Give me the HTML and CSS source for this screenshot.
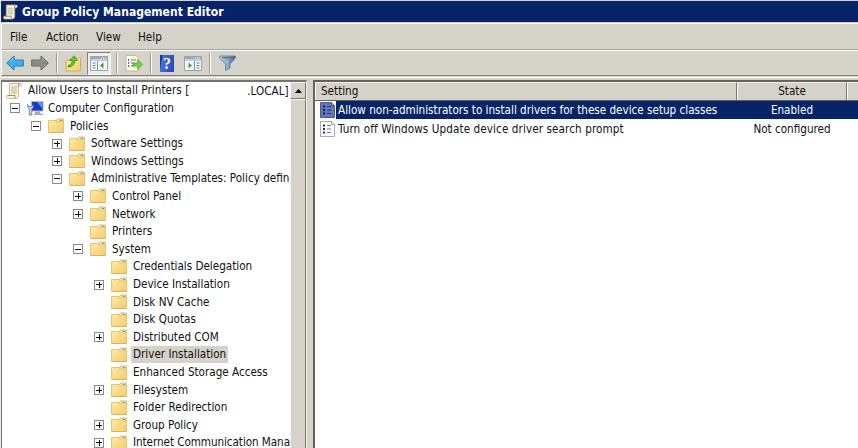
FILE: index.html
```html
<!DOCTYPE html>
<html lang="en">
<head>
<meta charset="utf-8">
<title>Group Policy Management Editor</title>
<link rel="stylesheet" href="styles.css">
</head>
<body>
<svg class="defs" width="0" height="0">
  <defs>
    <linearGradient id="gold" x1="0" y1="0" x2="1" y2="1"><stop offset="0" stop-color="#ffeba6"/><stop offset="1" stop-color="#f3cd6c"/></linearGradient>
    <linearGradient id="blue" x1="0" y1="0" x2="0" y2="1"><stop offset="0" stop-color="#8ed8fa"/><stop offset=".5" stop-color="#39aaf0"/><stop offset="1" stop-color="#45c4f6"/></linearGradient>
    <linearGradient id="grey" x1="0" y1="0" x2="0" y2="1"><stop offset="0" stop-color="#b5b5b5"/><stop offset=".5" stop-color="#858585"/><stop offset="1" stop-color="#aaa"/></linearGradient>
    <linearGradient id="steel" x1="0" y1="0" x2="1" y2="0"><stop offset="0" stop-color="#b8d4e6"/><stop offset=".5" stop-color="#8fb0c8"/><stop offset="1" stop-color="#3d5d78"/></linearGradient>
    <symbol id="folder" viewBox="0 0 16 16">
      <path d="M.5 2.500h8l1-1.500h6v13.500h-15z" fill="url(#gold)" stroke="#e6c474"/>
      <path d="M9.500 1.300h5.500v2.500h-6.500z" fill="#fff0b8" stroke="#cdae5d" stroke-width=".6"/>
      <path d="M11.500 2.500h2.500" stroke="#6f9dbb"/>
      <path d="M1 14.500h14.500" stroke="#d8b25c"/>
    </symbol>
    <symbol id="scroll" viewBox="0 0 16 16">
      <path d="M3.500.5h11c1.500 1 1 3-1 3h-1v9c0 2-1 3-3 3h-8c-1.500-1-1-3 0-3h2v-10z" fill="#fbf4d9" stroke="#b9aa83" stroke-width=".8"/>
      <path d="M12.500 3.500c-1-1 0-3 1.500-2.500M1.500 12.500h7.500c-.5 1.500 0 3 1 3" fill="none" stroke="#978b70"/>
      <path d="M5 4h6M5 6h6M5 8h6M5 10h6" stroke="#aaa386" stroke-width=".8"/>
    </symbol>
    <symbol id="computer" viewBox="0 0 17 16">
      <path d="M4.500 1.500h11.500v9.500H4.500z" fill="#1938c8" stroke="#a7b9d3"/>
      <path d="M10 2h5.500v7z" fill="#638bec"/>
      <path d="M8 11.500h5v2h3V15H7v-1.500h1z" fill="#9eabbd"/>
      <path d="M.7 4.500v3l1.500 1.500v6h2.600V9l1.500-1.500v-3L4.800 6.500H2.200z" fill="#bdd4e6" stroke="#507797" stroke-width=".8"/>
    </symbol>
    <symbol id="policy" viewBox="0 0 15 16">
      <path d="M.5.5h11l3 3v12H.5z" style="fill:var(--sheet);stroke:var(--edge)"/>
      <path d="M11.500.5v3h3" style="fill:var(--fold);stroke:var(--edge)"/>
      <path d="M3 4.500h2M3 8h2M3 11.500h2" style="stroke:var(--mark);stroke-width:2"/>
      <path d="M7 4.500h4M7 8h4M7 11.500h4" style="stroke:var(--line)"/>
    </symbol>
    <symbol id="window" viewBox="0 0 18 15">
      <path d="M.5.5h17v14H.5z" fill="#f6f8fa" stroke="#9aa3ad"/>
      <path d="M1 1h16v2.500H1z" fill="#9aa9bb"/>
      <path d="M11 2h1M13 2h1M15 2h1" stroke="#fff"/>
      <path d="M1 4.500h16" stroke="#c3ccd7"/>
    </symbol>
  </defs>
</svg>
<div class="window">
  <header class="titlebar">
    <svg class="title-icon"><use href="#scroll"/></svg>
    <h1>Group Policy Management Editor</h1>
  </header>
  <nav class="menu"><span class="m-file">File</span><span class="m-action">Action</span><span class="m-view">View</span><span class="m-help">Help</span></nav>
  <div class="toolbar">
    <svg class="arrow" viewBox="0 0 18 16"><path d="M.7 8 8 1v4h9.300v6H8v4z" fill="url(#blue)" stroke="#2873a9"/></svg>
    <svg class="arrow next" viewBox="0 0 18 16"><path d="M17.300 8 10 1v4H.7v6H10v4z" fill="url(#grey)" stroke="#646464"/></svg>
    <i class="sep s1"></i>
    <svg class="up" viewBox="0 0 17 17"><path d="M1 5h7l1-2h6.500v13H1z" fill="url(#gold)" stroke="#d2ac56"/><path d="M3 10.500c4-1 4-3 4-5H4.500L9 .8 12.500 5.500H10c0 4-2.500 6.500-7 6.500z" fill="#61c629" stroke="#348a22" stroke-width=".7"/></svg>
    <span class="pressed"><svg viewBox="0 0 18 15"><use href="#window"/><path d="M7.500 5v9" stroke="#7991b3"/><path d="M2.500 7h3M2.500 9.500h3M2.500 12h3" stroke="#5a7ba9"/><path d="m13.500 6.500-3.500 3 3.500 3z" fill="#36a431"/></svg></span>
    <i class="sep s2"></i>
    <svg class="export" viewBox="0 0 18 17"><path d="M1 .5h10l2.500 2.500v13H1z" fill="#fffbed" stroke="#c8b893"/><path d="M3 5h1M3 8h1M3 11h1" stroke="#333" stroke-width="1.500"/><path d="M5.500 5H11M5.500 8h4M5.500 11h4" stroke="#79749c"/><path d="M8 8h4.500V4.800l5 4.700-5 4.700V11H8z" fill="#74d044" stroke="#3ca322" stroke-width=".7"/></svg>
    <i class="sep s3"></i>
    <span class="help">?</span>
    <svg class="panel" viewBox="0 0 18 15"><use href="#window"/><path d="M10.500 5v9" stroke="#7991b3"/><path d="M12.500 7h3M12.500 9.500h3M12.500 12h3" stroke="#5a7ba9"/><path d="m4.500 6.500 3.500 3-3.500 3z" fill="#36a431"/></svg>
    <i class="sep s4"></i>
    <svg class="filter" viewBox="0 0 17 16"><path d="M.7 1h15.600v2L11 9v4L6.500 15.500V9L.7 3z" fill="url(#steel)" stroke="#587894" stroke-width=".8"/><path d="M2.500 2h12l-1 1.500H4z" fill="#5f7c93"/></svg>
  </div>
  <main class="panes">
    <section class="tree-pane">
      <ul class="tree">
        <li class="root"><svg class="icon"><use href="#scroll"/></svg><span class="label">Allow Users to Install Printers [</span><span class="domain">.LOCAL]</span></li>
        <li class="l0"><b class="box"></b><svg class="icon pc"><use href="#computer"/></svg><span class="label">Computer Configuration</span></li>
        <li class="l1"><b class="box"></b><svg class="icon"><use href="#folder"/></svg><span class="label">Policies</span></li>
        <li class="l2"><b class="box plus"></b><svg class="icon"><use href="#folder"/></svg><span class="label">Software Settings</span></li>
        <li class="l2"><b class="box plus"></b><svg class="icon"><use href="#folder"/></svg><span class="label">Windows Settings</span></li>
        <li class="l2"><b class="box"></b><svg class="icon"><use href="#folder"/></svg><span class="label templates">Administrative Templates: Policy defin</span></li>
        <li class="l3"><b class="box plus"></b><svg class="icon"><use href="#folder"/></svg><span class="label">Control Panel</span></li>
        <li class="l3"><b class="box plus"></b><svg class="icon"><use href="#folder"/></svg><span class="label">Network</span></li>
        <li class="l3"><b class="box none"></b><svg class="icon"><use href="#folder"/></svg><span class="label">Printers</span></li>
        <li class="l3"><b class="box"></b><svg class="icon"><use href="#folder"/></svg><span class="label">System</span></li>
        <li class="l4"><b class="box none"></b><svg class="icon"><use href="#folder"/></svg><span class="label">Credentials Delegation</span></li>
        <li class="l4"><b class="box plus"></b><svg class="icon"><use href="#folder"/></svg><span class="label">Device Installation</span></li>
        <li class="l4"><b class="box none"></b><svg class="icon"><use href="#folder"/></svg><span class="label">Disk NV Cache</span></li>
        <li class="l4"><b class="box none"></b><svg class="icon"><use href="#folder"/></svg><span class="label">Disk Quotas</span></li>
        <li class="l4"><b class="box plus"></b><svg class="icon"><use href="#folder"/></svg><span class="label">Distributed COM</span></li>
        <li class="l4"><b class="box none"></b><svg class="icon"><use href="#folder"/></svg><span class="label current">Driver Installation</span></li>
        <li class="l4"><b class="box none"></b><svg class="icon"><use href="#folder"/></svg><span class="label">Enhanced Storage Access</span></li>
        <li class="l4"><b class="box plus"></b><svg class="icon"><use href="#folder"/></svg><span class="label">Filesystem</span></li>
        <li class="l4"><b class="box none"></b><svg class="icon"><use href="#folder"/></svg><span class="label">Folder Redirection</span></li>
        <li class="l4"><b class="box plus"></b><svg class="icon"><use href="#folder"/></svg><span class="label">Group Policy</span></li>
        <li class="l4"><b class="box plus"></b><svg class="icon"><use href="#folder"/></svg><span class="label internet">Internet Communication Mana</span></li>
      </ul>
      <div class="scrollbar"><div class="up-button"><svg viewBox="0 0 7 4"><path d="M3.500 0 7 4H0z"/></svg></div><div class="thumb"></div></div>
    </section>
    <section class="list-pane">
      <div class="columns"><span>Setting</span><span class="state">State</span><span></span></div>
      <div class="row selected"><svg class="policy"><use href="#policy"/></svg><span class="name">Allow non-administrators to install drivers for these device setup classes</span><span class="state">Enabled</span></div>
      <div class="row"><svg class="policy"><use href="#policy"/></svg><span class="name wide">Turn off Windows Update device driver search prompt</span><span class="state">Not configured</span></div>
    </section>
  </main>
</div>
</body>
</html>
```
FILE: styles.css
```css
* { box-sizing: border-box; }
body { margin: 0; overflow: hidden; background: #d5d2ca; color: #111; font: 11.6px "DejaVu Sans Condensed", "DejaVu Sans", sans-serif; font-stretch: condensed; }
.defs { display: block; width: 0; height: 0; }
svg { display: block; flex: none; }
.window { width: 858px; height: 448px; display: flex; flex-direction: column; overflow: hidden; border-left: 1px solid #eceae5; }
.titlebar { height: 22px; flex: none; display: flex; align-items: center; background: #082468; border-top: 1px solid #d5d2ca; padding-left: 2px; }
.title-icon { width: 15px; height: 16px; margin-right: 4px; }
h1 { margin: 0; color: #fff; font-size: 12px; font-weight: bold; letter-spacing: 0.03px; white-space: nowrap; }
.menu { height: 27px; flex: none; display: flex; align-items: center; margin-top: 1px; border-top: 1px solid #fff; border-left: 1px solid #fff; border-bottom: 1px solid #a7a49e; padding: 0 0 0 8px; }
.menu span { flex: none; white-space: nowrap; }
.m-file { width: 36px; } .m-action { width: 50px; } .m-view { width: 42px; }
.toolbar { height: 26px; flex: none; display: flex; align-items: center; border-top: 1px solid #fff; border-left: 1px solid #fff; border-bottom: 1px solid #85827d; padding-left: 4px; }
.arrow { width: 18px; height: 16px; } .next { margin-left: 7px; }
.sep { width: 2px; height: 20px; background: #9b9994; border-right: 1px solid #fff; flex: none; }
.s1 { margin-left: 7px; } .s2 { margin-left: 5px; } .s3 { margin-left: 7px; } .s4 { margin-left: 7px; }
.up { width: 17px; height: 17px; margin-left: 7px; }
.pressed { width: 24px; height: 23px; margin-left: 5px; display: grid; place-items: center; flex: none; background: #efede8; border: 1px solid #85827d; border-right-color: #fff; border-bottom-color: #fff; }
.pressed svg { width: 18px; height: 15px; }
.export { width: 18px; height: 17px; margin-left: 7px; }
.help { width: 14px; height: 17px; margin-left: 8px; background: linear-gradient(100deg, #16399c 2px, #486fd9 3px, #2146b5); color: #fff; font: bold 16px/17px "Liberation Serif", serif; text-align: center; }
.panel { width: 18px; height: 15px; margin-left: 10px; }
.filter { width: 17px; height: 16px; margin-left: 8px; }
.panes { flex: 1; min-height: 0; display: flex; gap: 6px; margin-top: 1px; padding-top: 2px; border-top: 1px solid #fff; }
.tree-pane { width: 306px; flex: none; display: flex; background: #fff; border: solid #77746f; border-width: 2px 1px 0 1px; border-right-color: #f3f1ed; }
.tree { width: 288px; height: 367px; margin: 0; padding: 0; overflow: hidden; list-style: none; flex: none; }
.tree li { display: flex; align-items: center; height: 17.62px; white-space: nowrap; }
.root { padding-left: 4px; }
.l0 { padding-left: 8px; } .l1 { padding-left: 29px; } .l2 { padding-left: 50px; } .l3 { padding-left: 71px; } .l4 { padding-left: 92px; }
.box { width: 10px; height: 10px; border: 1px solid #8a8a8a; margin-right: 7px; flex: none; background: linear-gradient(#111, #111) center / 6px 1px no-repeat; }
.plus { background: linear-gradient(#111, #111) center / 6px 1px no-repeat, linear-gradient(#111, #111) center / 1px 6px no-repeat; }
.none { visibility: hidden; }
.icon { width: 16px; height: 16px; margin-right: 4px; }
.pc { width: 17px; margin-right: 2px; }
.label { padding: 1px 2px; line-height: 15px; }
.templates { padding-right: 0; }
.internet { letter-spacing: -0.06px; padding-right: 0; }
.current { background: #d5d2ca; }
.root .label { letter-spacing: 0.05px; }
.domain { margin-left: 56px; }
.scrollbar { width: 16px; flex: none; display: flex; flex-direction: column; background: #d5d2ca; }
.up-button { height: 17px; flex: none; display: grid; place-items: center; border: 1px solid #f5f3ef; border-right-color: #77746f; border-bottom-color: #77746f; }
.up-button svg { width: 7px; height: 4px; }
.thumb { flex: 1; border: 1px solid #f5f3ef; border-right-color: #77746f; border-bottom: 0; }
.list-pane { flex: 1; min-width: 0; background: #fff; border: solid #65625e; border-width: 2px 0 0 2px; }
.columns { height: 19px; display: grid; grid-template-columns: 422px 110px 1fr; background: #d5d2ca; border-bottom: 1px solid #65625e; }
.columns span { border-left: 1px solid #fff; border-top: 1px solid #f1efeb; border-right: 1px solid #77746f; padding-left: 5px; line-height: 17px; }
.columns span:last-child { border-right: 0; }
.columns span.state { padding: 0; }
.row { --sheet: #fff; --edge: #aaa8b0; --fold: #e3e3e7; --mark: #222c50; --line: #70759b; height: 18px; display: grid; grid-template-columns: 21px 401px 110px; align-items: center; white-space: nowrap; margin-bottom: 1px; }
.policy { width: 15px; height: 16px; margin-left: 5px; }
.name { padding-left: 2px; }
.wide { letter-spacing: 0.1px; }
.state { text-align: center; }
.selected { --sheet: #6277b3; --edge: #4b5d92; --fold: #98a6cc; --mark: #111f56; --line: #26366f; color: #fff; background: linear-gradient(90deg, #fff 21px, #082468 21px); }
```
